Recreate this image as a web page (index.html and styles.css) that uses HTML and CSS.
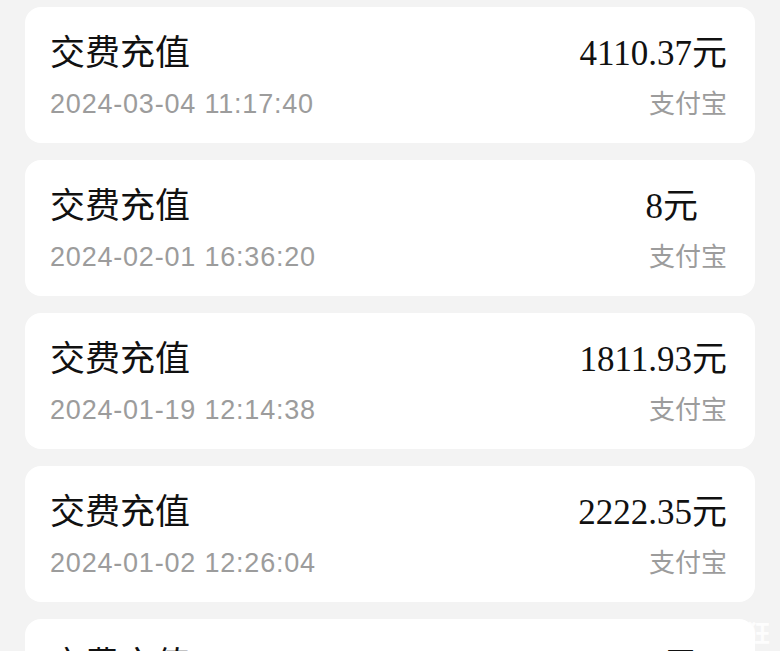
FILE: index.html
```html
<!DOCTYPE html>
<html lang="zh-CN">
<head>
<meta charset="utf-8">
<title>交费记录</title>
<link rel="stylesheet" href="styles.css">
</head>
<body>
<div class="list">
  <div class="card">
    <div class="row">
      <span class="title">交费充值</span>
      <span class="amount">4110.37元</span>
    </div>
    <div class="row sub">
      <span class="date">2024-03-04 11:17:40</span>
      <span class="method">支付宝</span>
    </div>
  </div>
  <div class="card">
    <div class="row">
      <span class="title">交费充值</span>
      <span class="amount amount-short">8元</span>
    </div>
    <div class="row sub">
      <span class="date">2024-02-01 16:36:20</span>
      <span class="method">支付宝</span>
    </div>
  </div>
  <div class="card">
    <div class="row">
      <span class="title">交费充值</span>
      <span class="amount">1811.93元</span>
    </div>
    <div class="row sub">
      <span class="date">2024-01-19 12:14:38</span>
      <span class="method">支付宝</span>
    </div>
  </div>
  <div class="card">
    <div class="row">
      <span class="title">交费充值</span>
      <span class="amount">2222.35元</span>
    </div>
    <div class="row sub">
      <span class="date">2024-01-02 12:26:04</span>
      <span class="method">支付宝</span>
    </div>
  </div>
  <div class="card">
    <div class="row">
      <span class="title">交费充值</span>
      <span class="amount amount-short">8元</span>
    </div>
    <div class="row sub">
      <span class="date">2023-12-15 10:08:12</span>
      <span class="method">支付宝</span>
    </div>
  </div>
</div>
<div class="watermark">狂</div>
</body>
</html>
```

FILE: styles.css
```css
html, body {
  margin: 0;
  padding: 0;
}
body {
  background: #f3f3f3;
  width: 780px;
  height: 651px;
  overflow: hidden;
  position: relative;
  font-family: "Liberation Sans", "Noto Sans CJK SC", sans-serif;
}
.list {
  display: flex;
  flex-direction: column;
  gap: 17px;
  padding: 7px 25px 0 25px;
}
.card {
  background: #ffffff;
  border-radius: 16px;
  height: 136px;
  box-sizing: border-box;
  padding: 21px 28px 0 25px;
  display: flex;
  flex-direction: column;
  flex-shrink: 0;
}
.row {
  display: flex;
  justify-content: space-between;
  align-items: baseline;
  height: 44px;
}
.row.sub {
  margin-top: 12px;
  height: 36px;
}
.title {
  font-family: "Noto Sans CJK SC", sans-serif;
  font-size: 35px;
  line-height: 44px;
  color: #111111;
}
.amount {
  font-family: "Liberation Serif", "Noto Sans CJK SC", serif;
  font-size: 35px;
  line-height: 44px;
  color: #111111;
}
.amount-short {
  margin-right: 29px;
}
.date {
  font-family: "Liberation Sans", sans-serif;
  font-size: 27px;
  letter-spacing: 0.8px;
  line-height: 36px;
  color: #9c9c9c;
}
.method {
  font-family: "Noto Sans CJK SC", sans-serif;
  font-size: 26px;
  line-height: 36px;
  color: #9c9c9c;
}
.watermark {
  position: absolute;
  right: 10px;
  top: 614px;
  font-family: "Noto Sans CJK SC", serif;
  font-size: 24px;
  font-weight: bold;
  color: rgba(255, 255, 255, 0.85);
}
```
